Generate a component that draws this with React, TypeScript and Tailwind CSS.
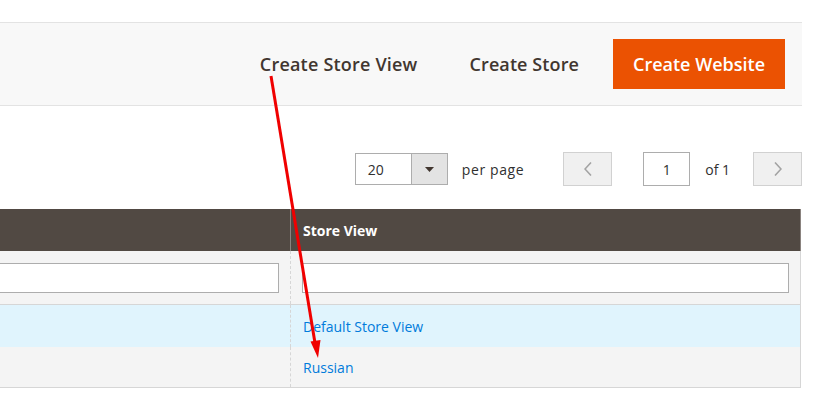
export default function App() {
  const font = { fontFamily: '"Open Sans", "Liberation Sans", sans-serif' }

  return (
    <div className="relative w-[823px] h-[396px] overflow-hidden bg-white" style={font}>
      {/* page is scrolled: left part cut off */}
      <div className="-ml-[40px] w-[842px]">

        {/* page actions */}
        <div className="mt-[22px] h-[84px] border-y border-[#e3e3e3] bg-[#f8f8f8] flex items-center justify-end gap-[14px] pr-[17px]">
          <button className="h-[50px] px-[19px] text-[18px] font-semibold text-[#41362f] tracking-[0.2px]">
            Create Store View
          </button>
          <button className="h-[50px] px-[19px] text-[18px] font-semibold text-[#41362f] tracking-[0.1px]">
            Create Store
          </button>
          <button className="ml-[1px] h-[50px] w-[172px] bg-[#eb5202] text-[18px] font-semibold text-white">
            Create Website
          </button>
        </div>

        {/* pager */}
        <div className="mt-[46px] h-[34px] flex items-center justify-end text-[14px] text-[#303030]">
          <div className="flex h-[32px] w-[93px] border border-[#adadad] bg-white">
            <div className="flex-1 flex items-center pl-[12px]">20</div>
            <div className="w-[36px] border-l border-[#adadad] bg-[#e3e3e3] flex items-center justify-center">
              <svg width="9" height="5" viewBox="0 0 9 5">
                <polygon points="0,0 9,0 4.5,5" fill="#41362f" />
              </svg>
            </div>
          </div>
          <span className="ml-[14px] tracking-[0.6px]">per page</span>
          <button className="ml-[39px] h-[34px] w-[49px] border border-[#d1d1d1] bg-[#f0f0f0] flex items-center justify-center">
            <svg width="8" height="14" viewBox="0 0 8 14">
              <polyline points="7,0.5 1,7 7,13.5" fill="none" stroke="#a3a3a3" strokeWidth="1.6" />
            </svg>
          </button>
          <div className="ml-[31px] h-[34px] w-[47px] border border-[#adadad] bg-white flex items-center justify-center">
            1
          </div>
          <span className="ml-[15px]">of 1</span>
          <button className="ml-[23px] h-[34px] w-[49px] border border-[#d1d1d1] bg-[#f0f0f0] flex items-center justify-center">
            <svg width="8" height="14" viewBox="0 0 8 14">
              <polyline points="1,0.5 7,7 1,13.5" fill="none" stroke="#a3a3a3" strokeWidth="1.6" />
            </svg>
          </button>
        </div>

        {/* grid */}
        <div className="mt-[23px] w-[841px] text-[14px]">
          <div className="flex h-[42px] bg-[#514943] text-white font-bold border-r border-[#8a837f]">
            <div className="w-[331px] border-r border-[#8a837f]"></div>
            <div className="flex-1 flex items-center pl-[12px]">Store View</div>
          </div>

          <div className="flex h-[54px] bg-[#f4f4f4] border-r border-[#d6d6d6] border-b border-b-[#d6d6d6]">
            <div className="w-[331px] border-r border-dashed border-[#d6d6d6] flex items-center pl-[11px] pr-[11px]">
              <div className="h-[30px] w-full border border-[#adadad] bg-white"></div>
            </div>
            <div className="flex-1 flex items-center pl-[11px] pr-[11px]">
              <div className="h-[30px] w-full border border-[#adadad] bg-white"></div>
            </div>
          </div>

          <div className="flex h-[42px] bg-[#e0f4fd] border-r border-[#d6d6d6]">
            <div className="w-[331px] border-r border-dashed border-[#d6d6d6]"></div>
            <div className="flex-1 flex items-center pl-[12px] text-[#007bdb]">Default Store View</div>
          </div>

          <div className="flex h-[41px] bg-[#f4f4f4] border-r border-[#d6d6d6] border-b border-b-[#d6d6d6]">
            <div className="w-[331px] border-r border-dashed border-[#d6d6d6]"></div>
            <div className="flex-1 flex items-center pl-[12px] text-[#007bdb]">Russian</div>
          </div>
        </div>
      </div>

      {/* annotation arrow */}
      <svg className="absolute left-0 top-0 pointer-events-none" width="823" height="396">
        <line x1="271" y1="76" x2="315" y2="343" stroke="#f00000" strokeWidth="3" />
        <polygon points="318,358 310.5,341.5 320.5,340" fill="#f00000" />
      </svg>
    </div>
  )
}
